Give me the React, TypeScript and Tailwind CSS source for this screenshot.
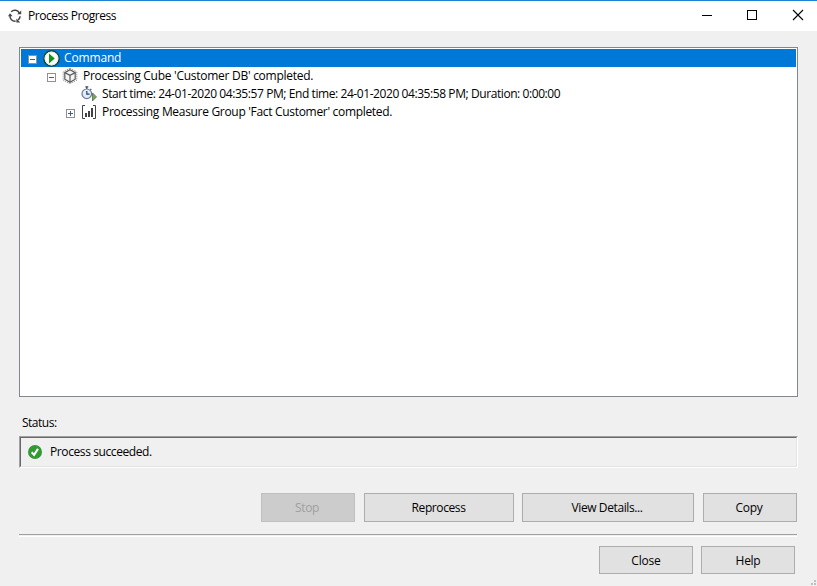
import type { ReactNode } from 'react';
import { clsx } from 'clsx';

function RefreshIcon() {
    return (
        <svg width="14" height="14" viewBox="0 0 14 14" fill="none" stroke="#444" strokeWidth="1.5">
            <path d="M3.2 2.8A5 5 0 0 1 11.4 4.2" />
            <path d="M12.1 7.2A5 5 0 0 1 10 11" />
            <path d="M7.6 12.1A5 5 0 0 1 2 6.6" />
            <path d="M9.2 5.2h4V1.4zM8.4 9.4v4h3.8zM0 7.2l2-3 2.6 3z" fill="#444" stroke="none" />
        </svg>
    );
}

function PlayIcon() {
    return (
        <svg width="17" height="17" viewBox="0 0 17 17">
            <circle cx="8.5" cy="8.5" r="7.6" fill="#fff" stroke="#173f1c" strokeWidth="1.3" />
            <circle cx="8.5" cy="8.5" r="6.4" fill="none" stroke="#d5e8d3" strokeWidth=".8" />
            <path d="M6 3.6v9.8l5.8-4.9z" fill="#149414" />
        </svg>
    );
}

function CubeIcon() {
    return (
        <svg width="16" height="16" viewBox="0 0 16 16" fill="none" stroke="#5a5a5a">
            <path d="M8 1.8 13.2 4.6v6.6L8 14.2l-5.2-3V4.6z" fill="#f4f4f4" strokeWidth="1.2" />
            <path d="M2.8 4.6 8 7.4l5.2-2.8M8 7.4v6.8" strokeWidth="1.2" />
            <path d="M8 .4 14.8 3.8v8.4L8 15.6l-6.8-3.4V3.8z" stroke="#707070" strokeWidth=".9" strokeDasharray="1 1" />
        </svg>
    );
}

function StopwatchIcon() {
    return (
        <svg width="17" height="16" viewBox="0 0 17 16">
            <path d="M4.3 .9h3M5.8 1v2M9.4 2.9l.9.8" stroke="#3e4a5c" strokeWidth="1.3" />
            <circle cx="5.8" cy="7.8" r="4.8" fill="#e3edfa" stroke="#6b7c98" strokeWidth="1.2" />
            <path d="M5.8 4.9v3.2h2.8" fill="none" stroke="#263f70" strokeWidth="1.2" />
            <path d="M11.5 6.9v8l4-4z" fill="#72ac4c" stroke="#55645a" strokeWidth=".8" />
        </svg>
    );
}

function MeasureIcon() {
    return (
        <svg width="16" height="16" viewBox="0 0 16 16" fill="none" stroke="#424242">
            <path d="M4 1.5H1.5v13H4M12 1.5h2.5v13H12" />
            <path d="M5 9v4M8 7v6M11 4v9" strokeWidth="2" />
        </svg>
    );
}

function SuccessIcon() {
    return (
        <svg width="14" height="14" viewBox="0 0 14 14">
            <circle cx="7" cy="7" r="7" fill="#339933" />
            <path d="m3.7 7.3 2.4 2.6 3.9-6" fill="none" stroke="#fff" strokeWidth="2.1" />
        </svg>
    );
}

function Expander({ open }: { open: boolean }) {
    return (
        <svg width="9" height="9" viewBox="0 0 9 9" className="mt-[2px] shrink-0">
            <rect x=".5" y=".5" width="8" height="8" fill="#fff" stroke="#919191" />
            <path d="M2 4.5h5" stroke="#3f5aa0" />
            {!open && <path d="M4.5 2v5" stroke="#3f5aa0" />}
        </svg>
    );
}

interface TreeRowProps {
    icon: ReactNode;
    children: ReactNode;
    className: string;
    open?: boolean;
    selected?: boolean;
}

function TreeRow({ icon, children, className, open, selected }: TreeRowProps) {
    return (
        <div className={clsx('flex h-[18px] items-center whitespace-nowrap', selected && 'bg-[#0078d7] text-white', className)}>
            <span className="flex w-[15px] shrink-0">{open !== undefined && <Expander open={open} />}</span>
            <span className="flex w-[21px] shrink-0">{icon}</span>
            <span>{children}</span>
        </div>
    );
}

function Button({ children, className, disabled }: { children: ReactNode; className: string; disabled?: boolean }) {
    return (
        <button
            disabled={disabled}
            className={clsx(
                'flex items-center justify-center border pt-px',
                disabled ? 'border-[#bfbfbf] bg-[#cccccc] text-[#a0a0a0]' : 'border-[#adadad] bg-[#e1e1e1]',
                className
            )}
        >
            {children}
        </button>
    );
}

export default function App() {
    return (
        <div className="flex h-[586px] w-[817px] flex-col overflow-hidden bg-[#f0f0f0] font-['Open_Sans','Noto_Sans',sans-serif] text-[12px] leading-[16px] text-black">
            <header className="flex h-[31px] shrink-0 items-center border-t border-[#1883d7] bg-white pl-2">
                <RefreshIcon />
                <h1 className="ml-[6px] tracking-[-0.46px]">Process Progress</h1>
                <svg className="ml-auto" width="125" height="30" viewBox="0 0 125 30" fill="none" stroke="#000" shapeRendering="crispEdges">
                    <path d="M10 14.5h10" />
                    <rect x="55.5" y="9.5" width="9" height="9" />
                    <path d="m101 9 10 10m0-10-10 10" shapeRendering="auto" strokeWidth="1.1" />
                </svg>
            </header>

            <main className="flex flex-1 flex-col pl-[19px]">
                <div className="mt-4 h-[350px] w-[779px] border border-[#828790] bg-white p-px">
                    <TreeRow className="pl-[7px] tracking-[-0.15px]" icon={<PlayIcon />} open selected>
                        Command
                    </TreeRow>
                    <TreeRow className="pl-[26px] tracking-[-0.27px]" icon={<CubeIcon />} open>
                        Processing Cube 'Customer DB' completed.
                    </TreeRow>
                    <TreeRow className="pl-[45px] tracking-[-0.42px]" icon={<StopwatchIcon />}>
                        Start time: 24-01-2020 04:35:57 PM; End time: 24-01-2020 04:35:58 PM; Duration: 0:00:00
                    </TreeRow>
                    <TreeRow className="pl-[45px] tracking-[-0.31px]" icon={<MeasureIcon />} open={false}>
                        Processing Measure Group 'Fact Customer' completed.
                    </TreeRow>
                </div>

                <p className="mt-[18px] ml-[3px] tracking-[-0.5px]">Status:</p>
                <div className="mt-[5px] h-[32px] w-[779px] border border-t-[#a0a0a0] border-r-white border-b-white border-l-[#a0a0a0]">
                    <div className="flex h-full items-center border border-t-[#696969] border-r-[#e3e3e3] border-b-[#e3e3e3] border-l-[#696969] pl-[7px]">
                        <SuccessIcon />
                        <span className="ml-2 tracking-[-0.4px]">Process succeeded.</span>
                    </div>
                </div>

                <div className="mt-[25px] flex h-[29px] pl-[242px]">
                    <Button className="w-[94px] pr-[2px] tracking-[-0.4px]" disabled>Stop</Button>
                    <Button className="ml-[9px] w-[150px] pr-px tracking-[-0.4px]">Reprocess</Button>
                    <Button className="ml-2 w-[172px] pr-[2px] tracking-[-0.4px]">View Details...</Button>
                    <Button className="ml-[9px] w-[94px] pr-[2px] tracking-[-0.3px]">Copy</Button>
                </div>
                <div className="mt-3 h-[3px] w-[778px] border-t border-b border-t-[#a0a0a0] border-b-white" />
                <div className="mt-[9px] flex h-[28px] gap-2 pl-[580px]">
                    <Button className="w-[94px] tracking-[-0.2px]">Close</Button>
                    <Button className="w-[94px] tracking-[-0.3px]">Help</Button>
                </div>
                <svg className="mt-auto ml-auto" width="6" height="6" viewBox="0 0 6 6" fill="#bfbfbf">
                    <path d="M3 0h2v2H3zM0 3h2v2H0zM3 3h2v2H3z" />
                </svg>
            </main>
        </div>
    );
}
